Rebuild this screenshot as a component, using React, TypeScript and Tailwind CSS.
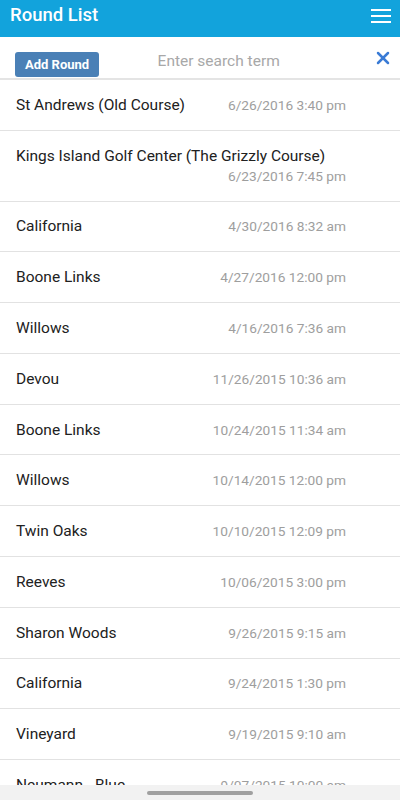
import { X } from "lucide-react";

const rounds: Array<{ name: string; date: string }> = [
  { name: "St Andrews (Old Course)", date: "6/26/2016 3:40 pm" },
  { name: "Kings Island Golf Center (The Grizzly Course)", date: "6/23/2016 7:45 pm" },
  { name: "California", date: "4/30/2016 8:32 am" },
  { name: "Boone Links", date: "4/27/2016 12:00 pm" },
  { name: "Willows", date: "4/16/2016 7:36 am" },
  { name: "Devou", date: "11/26/2015 10:36 am" },
  { name: "Boone Links", date: "10/24/2015 11:34 am" },
  { name: "Willows", date: "10/14/2015 12:00 pm" },
  { name: "Twin Oaks", date: "10/10/2015 12:09 pm" },
  { name: "Reeves", date: "10/06/2015 3:00 pm" },
  { name: "Sharon Woods", date: "9/26/2015 9:15 am" },
  { name: "California", date: "9/24/2015 1:30 pm" },
  { name: "Vineyard", date: "9/19/2015 9:10 am" },
  { name: "Neumann - Blue", date: "9/07/2015 10:00 am" },
];

export default function App() {
  return (
    <div className="relative h-[800px] w-[400px] overflow-hidden bg-white font-['Roboto',sans-serif]">
      <header className="flex h-[37px] items-start justify-between bg-[#12a3dc] pl-[10px] pr-[9px]">
        <h1 className="mt-[4px] text-[18.5px] leading-[22px] font-medium text-white">Round List</h1>
        <button className="mt-[9px] flex h-[14px] w-[20px] flex-col justify-between">
          <span className="h-[2px] w-full bg-white" />
          <span className="h-[2px] w-full bg-white" />
          <span className="h-[2px] w-full bg-white" />
        </button>
      </header>

      <div className="flex h-[43px] items-start border-b-2 border-[#e4e4e4] pl-[15px] pr-[7px]">
        <button className="mt-[15px] h-[25px] rounded-[3px] bg-[#4a80b6] px-[10px] text-[13px] font-bold text-white">
          Add Round
        </button>
        <input
          placeholder="Enter search term"
          className="mt-[15px] ml-2 h-[20px] w-[223px] bg-transparent text-center text-[15.5px] text-[#333] outline-none placeholder:text-[#a8a8a8]"
        />
        <button className="mt-[11px] ml-auto">
          <X className="h-[20px] w-[20px] text-[#3a7bd5]" strokeWidth={3} />
        </button>
      </div>

      <ul>
        {rounds.map((r, i) => (
          <li
            key={`${r.name}-${i}`}
            className="flex flex-wrap items-center justify-between border-b border-[#e2e2e2] py-[14.9px] pl-4 pr-[54px]"
          >
            <span className="text-[15.5px] leading-5 text-[#212121]">{r.name}</span>
            <span className="ml-auto text-[13.7px] leading-5 text-[#9e9e9e]">{r.date}</span>
          </li>
        ))}
      </ul>

      <div className="absolute bottom-0 left-0 flex h-[15px] w-full items-center justify-center bg-[#f2f2f2]">
        <span className="h-[4px] w-[106px] rounded-full bg-[#a0a0a0]" />
      </div>
    </div>
  );
}
